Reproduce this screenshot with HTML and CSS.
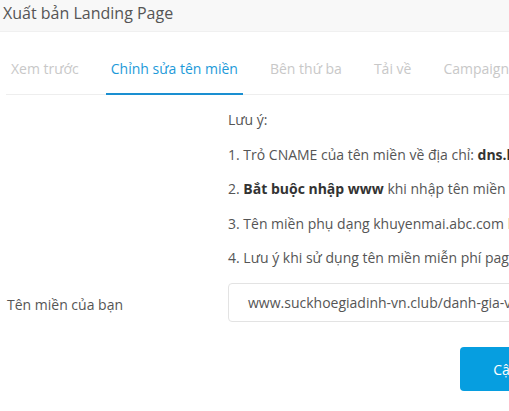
FILE: index.html
```html
<!DOCTYPE html>
<html>
<head>
<meta charset="utf-8">
<link rel="stylesheet" href="styles.css">
</head>
<body>
<div class="page">
  <div class="header"><span class="title">Xuất bản Landing Page</span></div>
  <div class="tabs">
    <div class="tab">Xem trước</div>
    <div class="tab active">Chỉnh sửa tên miền</div>
    <div class="tab">Bên thứ ba</div>
    <div class="tab">Tải về</div>
    <div class="tab">Campaign</div>
  </div>
  <div class="form">
    <div class="spacer"></div>
    <div class="notes">
      <p>Lưu ý:</p>
      <p>1. Trỏ CNAME của tên miền về địa chỉ: <b>dns.ladipage.net</b></p>
      <p>2. <b>Bắt buộc nhập www</b> khi nhập tên miền chính</p>
      <p>3. Tên miền phụ dạng khuyenmai.abc.com không cần nhập www</p>
      <p>4. Lưu ý khi sử dụng tên miền miễn phí pagedemo.me</p>
    </div>
    <label class="label">Tên miền của bạn</label>
    <div class="input">www.suckhoegiadinh-vn.club/danh-gia-vien-uong</div>
    <div class="spacer"></div>
    <div class="actions"><button class="btn">Cập nhật</button></div>
  </div>
</div>
</body>
</html>
```

FILE: styles.css
```css
html, body {
  margin: 0;
  padding: 0;
  overflow: hidden;
  background: #fff;
}
.page {
  width: 509px;
  height: 411px;
  overflow: hidden;
  font-family: "Open Sans", "Noto Sans", sans-serif;
  color: #555;
}
.header {
  height: 32px;
  background: #f8f8f8;
  border-bottom: 1px solid #f0f0f0;
  box-sizing: border-box;
  padding-left: 3px;
  display: flex;
  align-items: center;
}
.title {
  font-size: 16px;
  color: #555;
  line-height: 20px;
  margin-top: -6px;
}
.tabs {
  display: flex;
  margin-left: 6px;
  padding-top: 27px;
  border-bottom: 1px solid #eeeeee;
  white-space: nowrap;
  width: 600px;
}
.tab {
  font-size: 14px;
  line-height: 19px;
  color: #c8c8c8;
  padding: 0 5px 15px;
  margin-right: 22px;
  margin-bottom: -1px;
  border-bottom: 2px solid transparent;
}
.tab.active {
  color: #1c9ad9;
  border-bottom-color: #1a8fd1;
}
.form {
  display: grid;
  grid-template-columns: 228px 357px;
  width: 620px;
  padding-top: 15px;
}
.notes p {
  margin: 0 0 14.5px;
  font-size: 14px;
  line-height: 20px;
  white-space: nowrap;
  color: #555;
}
.notes b {
  color: #333;
}
.label {
  font-size: 14px;
  padding-left: 7px;
  align-self: center;
  margin-top: 4px;
}
.input {
  height: 39px;
  box-sizing: border-box;
  border: 1px solid #e3e3e3;
  border-radius: 4px;
  padding: 0 19px;
  display: flex;
  align-items: center;
  font-size: 14px;
  white-space: nowrap;
  overflow: hidden;
  color: #555;
  margin-top: 0.5px;
}
.actions {
  display: flex;
  justify-content: flex-end;
  padding-top: 25px;
}
.btn {
  height: 44px;
  border: none;
  border-radius: 4px;
  background: #069ee0;
  color: #fff;
  font-family: "Open Sans", "Noto Sans", sans-serif;
  font-size: 14px;
  padding: 0 33px;
}
```
